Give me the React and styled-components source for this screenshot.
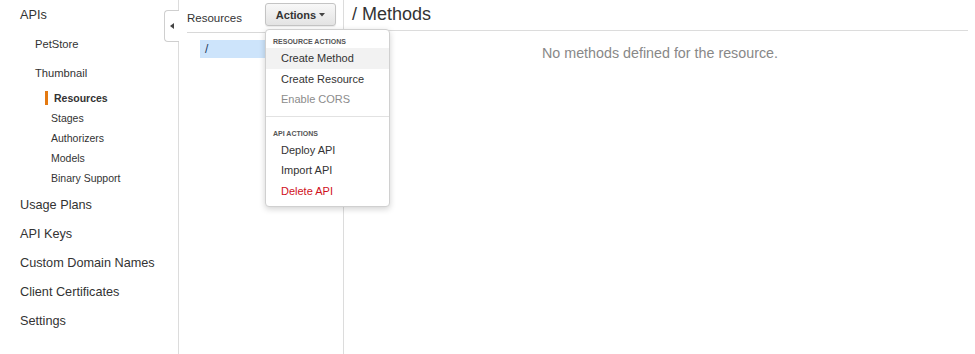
import React from 'react';
import styled, { createGlobalStyle } from 'styled-components';

const GlobalStyle = createGlobalStyle`
  html, body {
    margin: 0;
    padding: 0;
    background: #fff;
  }
  body {
    font-family: "Liberation Sans", Arial, Helvetica, sans-serif;
    color: #333;
  }
`;

const navTop = ['APIs'];
const apis = ['PetStore', 'Thumbnail'];
const subNav = ['Resources', 'Stages', 'Authorizers', 'Models', 'Binary Support'];
const navBottom = ['Usage Plans', 'API Keys', 'Custom Domain Names', 'Client Certificates', 'Settings'];

const resourceActions = [
  { label: 'Create Method', hover: true },
  { label: 'Create Resource' },
  { label: 'Enable CORS', tone: 'muted' },
];
const apiActions = [
  { label: 'Deploy API' },
  { label: 'Import API' },
  { label: 'Delete API', tone: 'danger' },
];

function App() {
  return (
    <>
      <GlobalStyle />
      <Page>
        <Sidebar>
          {navTop.map((n) => (
            <NavItem key={n} $first>
              {n}
            </NavItem>
          ))}
          {apis.map((a) => (
            <ApiItem key={a}>{a}</ApiItem>
          ))}
          <SubList>
            {subNav.map((s, i) => (
              <SubItem key={s}>
                <SubLabel $active={i === 0}>{s}</SubLabel>
              </SubItem>
            ))}
          </SubList>
          <BottomNav>
            {navBottom.map((n) => (
              <NavItem key={n}>{n}</NavItem>
            ))}
          </BottomNav>
          <CollapseTab>
            <svg width="4" height="6" viewBox="0 0 4 6">
              <path d="M4 0 L0 3 L4 6 Z" fill="#444" />
            </svg>
          </CollapseTab>
        </Sidebar>

        <ResourcesPanel>
          <PanelHeader>
            <PanelTitle>Resources</PanelTitle>
            <ActionsWrap>
              <ActionsButton>
                Actions
                <svg width="6" height="4" viewBox="0 0 6 4">
                  <path d="M0 0 L6 0 L3 3.5 Z" fill="#444" />
                </svg>
              </ActionsButton>
              <Dropdown>
                <MenuHeading>Resource Actions</MenuHeading>
                {resourceActions.map((a) => (
                  <MenuItem key={a.label} $hover={a.hover} $tone={a.tone}>
                    {a.label}
                  </MenuItem>
                ))}
                <MenuDivider />
                <MenuHeading>API Actions</MenuHeading>
                {apiActions.map((a) => (
                  <MenuItem key={a.label} $tone={a.tone}>
                    {a.label}
                  </MenuItem>
                ))}
              </Dropdown>
            </ActionsWrap>
          </PanelHeader>
          <TreeRow $selected>/</TreeRow>
        </ResourcesPanel>

        <Main>
          <MainHeader>/ Methods</MainHeader>
          <EmptyNote>No methods defined for the resource.</EmptyNote>
        </Main>
      </Page>
    </>
  );
}

const Page = styled.div`
  display: flex;
  width: 975px;
  height: 354px;
  overflow: hidden;
  background: #fff;
`;

const Sidebar = styled.nav`
  position: relative;
  flex: 0 0 179px;
  box-sizing: border-box;
  border-right: 1px solid #dcdcdc;
  padding-left: 20px;
  display: flex;
  flex-direction: column;
`;

const NavItem = styled.div`
  font-size: 12.7px;
  line-height: ${(p) => (p.$first ? '30px' : '29px')};
  color: #333;
  white-space: nowrap;
`;

const ApiItem = styled.div`
  font-size: 11.2px;
  line-height: 29px;
  padding-left: 15px;
  color: #333;
`;

const SubList = styled.div`
  display: flex;
  flex-direction: column;
  padding-left: 25px;
`;

const SubItem = styled.div`
  height: 20px;
  display: flex;
  align-items: center;
`;

const SubLabel = styled.span`
  display: inline-block;
  position: relative;
  left: ${(p) => (p.$active ? '0' : '-3px')};
  font-size: 10.5px;
  line-height: 14px;
  padding-left: 6px;
  border-left: 3px solid ${(p) => (p.$active ? '#e47911' : 'transparent')};
  font-weight: ${(p) => (p.$active ? 700 : 400)};
  color: #333;
`;

const BottomNav = styled.div`
  display: flex;
  flex-direction: column;
  margin-top: 3px;
`;

const CollapseTab = styled.div`
  position: absolute;
  top: 10px;
  right: -1px;
  width: 15px;
  height: 32px;
  box-sizing: border-box;
  background: #fff;
  border: 1px solid #cfcfcf;
  border-right: none;
  border-radius: 4px 0 0 4px;
  display: flex;
  align-items: center;
  justify-content: center;
`;

const ResourcesPanel = styled.section`
  flex: 0 0 165px;
  box-sizing: border-box;
  border-right: 1px solid #dcdcdc;
  padding: 0 7px 0 8px;
  display: flex;
  flex-direction: column;
`;

const PanelHeader = styled.div`
  display: flex;
  justify-content: space-between;
  align-items: flex-start;
  height: 33px;
  box-sizing: border-box;
  border-bottom: 1px solid #d8d8d8;
`;

const PanelTitle = styled.div`
  font-size: 11.5px;
  line-height: 16px;
  margin-top: 10px;
  color: #333;
`;

const ActionsWrap = styled.div`
  position: relative;
  margin-top: 3px;
  z-index: 5;
`;

const ActionsButton = styled.div`
  width: 71px;
  height: 23px;
  box-sizing: border-box;
  border: 1px solid #c4c4c4;
  border-radius: 3px;
  background: linear-gradient(#f8f8f8, #e3e3e3);
  box-shadow: 0 1px 1px rgba(0, 0, 0, 0.08);
  font-size: 11px;
  font-weight: 700;
  color: #333;
  display: flex;
  align-items: center;
  justify-content: center;
  gap: 3px;
  svg {
    margin-top: 1px;
  }
`;

const Dropdown = styled.div`
  position: absolute;
  top: 26px;
  left: 0;
  width: 125px;
  box-sizing: border-box;
  background: #fff;
  border: 1px solid #d0d0d0;
  border-radius: 4px;
  box-shadow: 0 2px 6px rgba(0, 0, 0, 0.18);
  padding: 5px 0 5px;
`;

const MenuHeading = styled.div`
  font-size: 7px;
  font-weight: 700;
  text-transform: uppercase;
  line-height: 13px;
  color: #555;
  padding-left: 7px;
`;

const MenuItem = styled.div`
  height: 20.5px;
  line-height: 20.5px;
  padding-left: 15px;
  font-size: 11px;
  background: ${(p) => (p.$hover ? '#f2f2f2' : 'transparent')};
  color: ${(p) =>
    p.$tone === 'muted' ? '#8c8c8c' : p.$tone === 'danger' ? '#d0101b' : '#333'};
`;

const MenuDivider = styled.div`
  height: 1px;
  background: #e2e2e2;
  margin: 6px 0 10px;
`;

const TreeRow = styled.div`
  margin: 7px 0 0 13px;
  height: 18px;
  line-height: 18px;
  padding-left: 5px;
  font-size: 12px;
  color: #23395b;
  background: ${(p) => (p.$selected ? '#cde4fb' : 'transparent')};
`;

const Main = styled.main`
  flex: 1;
  padding: 0 7px 0 8px;
  display: flex;
  flex-direction: column;
`;

const MainHeader = styled.h1`
  margin: 0;
  font-size: 18px;
  font-weight: 400;
  line-height: 28px;
  height: 31px;
  box-sizing: border-box;
  border-bottom: 1px solid #dcdcdc;
  color: #333;
`;

const EmptyNote = styled.p`
  margin: 12px 0 0;
  text-align: center;
  font-size: 14.3px;
  line-height: 20px;
  color: #888;
`;

export default App;
